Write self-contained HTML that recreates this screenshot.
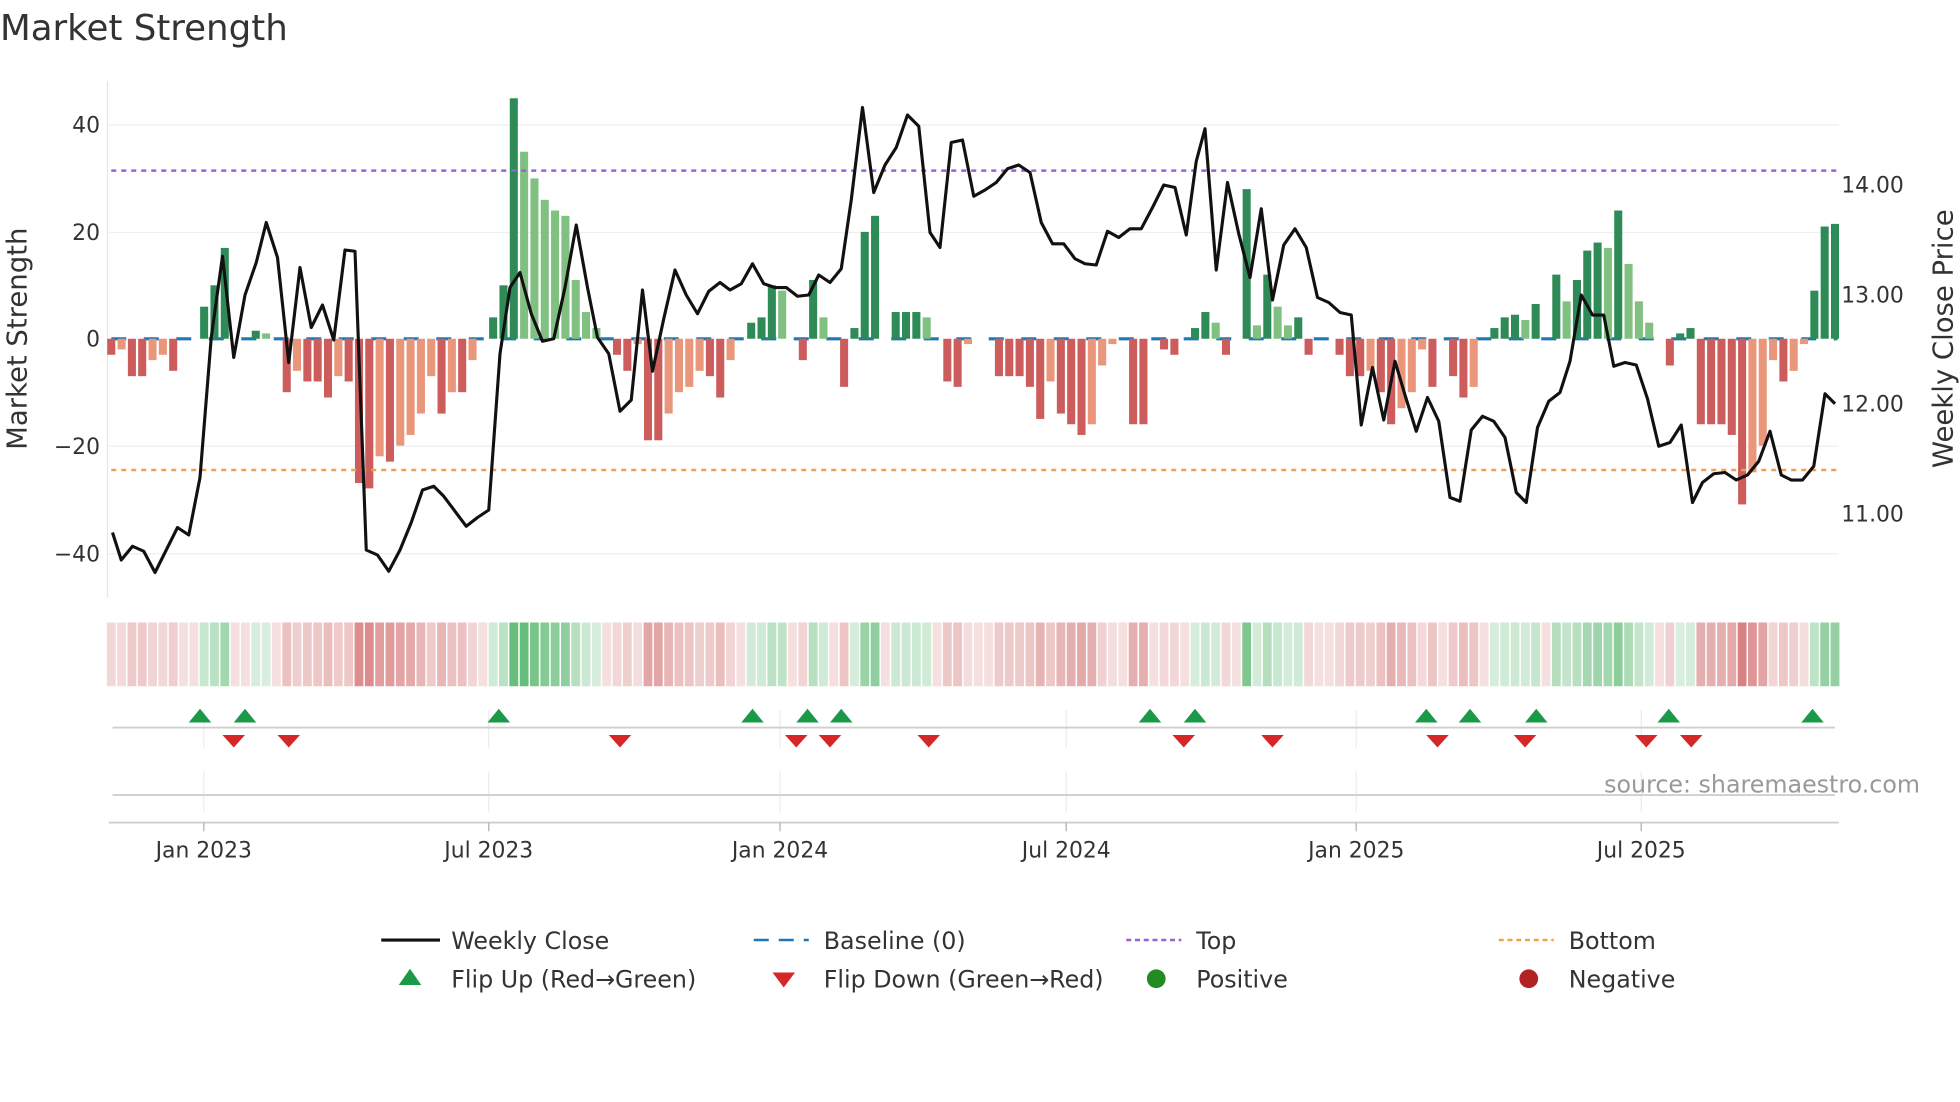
<!DOCTYPE html>
<html><head><meta charset="utf-8"><style>
html,body{margin:0;padding:0;background:#fff;}
svg{display:block;font-family:"DejaVu Sans","Liberation Sans",sans-serif;}
</style></head><body>
<svg id="s" width="1960" height="1102" viewBox="0 0 1568 881.6" xmlns="http://www.w3.org/2000/svg">
<rect width="1568" height="882" fill="#fff"/>
<text x="0" y="32" font-size="28.5" fill="#333">Market Strength</text>
<line x1="86" y1="65" x2="86" y2="478" stroke="#e6e6e6"/>
<g stroke="#eeeeee" stroke-width="1">
<line x1="87" y1="100" x2="1471" y2="100"/><line x1="87" y1="186" x2="1471" y2="186"/>
<line x1="87" y1="357" x2="1471" y2="357"/><line x1="87" y1="443" x2="1471" y2="443"/>
</g>
<g font-size="17.5" fill="#333" text-anchor="end">
<text x="80" y="106">40</text><text x="80" y="192">20</text><text x="80" y="277">0</text>
<text x="80" y="363">−20</text><text x="80" y="449">−40</text>
</g>
<g font-size="17.5" fill="#333">
<text x="1473" y="154">14.00</text><text x="1473" y="242">13.00</text>
<text x="1473" y="329">12.00</text><text x="1473" y="417">11.00</text>
</g>
<text transform="translate(21,271) rotate(-90)" font-size="22" fill="#333" text-anchor="middle">Market Strength</text>
<text transform="translate(1562,271) rotate(-90)" font-size="22" fill="#333" text-anchor="middle">Weekly Close Price</text>
<line x1="89" y1="271" x2="1470" y2="271" stroke="#1f77b4" stroke-width="2.5" stroke-dasharray="12,14"/>
<g id="bars"></g>
<line x1="89" y1="136.5" x2="1470" y2="136.5" stroke="#9b5fd6" stroke-width="2" stroke-dasharray="4,4"/>
<line x1="89" y1="376" x2="1470" y2="376" stroke="#f0a050" stroke-width="2" stroke-dasharray="4,4"/>
<polyline id="price" fill="none" stroke="#111" stroke-width="2.5" stroke-linejoin="round"/>
<g id="heat"></g>
<g stroke="#e8ecf2" stroke-width="1">
<line x1="163" y1="568" x2="163" y2="598"/><line x1="391" y1="568" x2="391" y2="598"/><line x1="624" y1="568" x2="624" y2="598"/><line x1="853" y1="568" x2="853" y2="598"/><line x1="1085" y1="568" x2="1085" y2="598"/><line x1="1313" y1="568" x2="1313" y2="598"/>
<line x1="163" y1="617" x2="163" y2="650"/><line x1="391" y1="617" x2="391" y2="650"/><line x1="624" y1="617" x2="624" y2="650"/><line x1="853" y1="617" x2="853" y2="650"/><line x1="1085" y1="617" x2="1085" y2="650"/><line x1="1313" y1="617" x2="1313" y2="650"/>
</g>
<line x1="90" y1="582" x2="1468" y2="582" stroke="#cfcfcf" stroke-width="1.5"/>
<line x1="90" y1="636" x2="1468" y2="636" stroke="#cfcfcf" stroke-width="1.5"/>
<line x1="87" y1="658" x2="1471" y2="658" stroke="#cfcfcf" stroke-width="1.5"/>
<g stroke="#bbb" stroke-width="1.2">
<line x1="163" y1="658" x2="163" y2="665"/><line x1="391" y1="658" x2="391" y2="665"/><line x1="624" y1="658" x2="624" y2="665"/><line x1="853" y1="658" x2="853" y2="665"/><line x1="1085" y1="658" x2="1085" y2="665"/><line x1="1313" y1="658" x2="1313" y2="665"/>
</g>
<g id="tri"></g>
<text x="1536" y="634" font-size="19" fill="#999" text-anchor="end">source: sharemaestro.com</text>
<g font-size="17.5" fill="#333" text-anchor="middle">
<text x="163" y="686">Jan 2023</text><text x="391" y="686">Jul 2023</text><text x="624" y="686">Jan 2024</text>
<text x="853" y="686">Jul 2024</text><text x="1085" y="686">Jan 2025</text><text x="1313" y="686">Jul 2025</text>
</g>
<g font-size="19" fill="#333">
<line x1="305" y1="752" x2="352" y2="752" stroke="#111" stroke-width="2.5"/>
<text x="361" y="759">Weekly Close</text>
<line x1="603" y1="752" x2="647" y2="752" stroke="#1f77b4" stroke-width="2" stroke-dasharray="12,8"/>
<text x="659" y="759">Baseline (0)</text>
<line x1="901" y1="752" x2="945" y2="752" stroke="#9b5fd6" stroke-width="2" stroke-dasharray="4,3"/>
<text x="957" y="759">Top</text>
<line x1="1199" y1="752" x2="1243" y2="752" stroke="#f0a050" stroke-width="2" stroke-dasharray="4,3"/>
<text x="1255" y="759">Bottom</text>
<polygon points="319,788 328,775 337,788" fill="#1a9a48"/>
<text x="361" y="790">Flip Up (Red→Green)</text>
<polygon points="618,778 636,778 627,790" fill="#d62728"/>
<text x="659" y="790">Flip Down (Green→Red)</text>
<circle cx="925" cy="783" r="7.5" fill="#228b22"/>
<text x="957" y="790">Positive</text>
<circle cx="1223" cy="783" r="7.5" fill="#b22222"/>
<text x="1255" y="790">Negative</text>
</g>
</svg>
<script>
var NS="http://www.w3.org/2000/svg";
function el(t,a,p){var e=document.createElementNS(NS,t);for(var k in a)e.setAttribute(k,a[k]);p.appendChild(e);return e;}
var v=[-3,-2,-7,-7,-4,-3,-6,0,0,6,10,17,0,0,1.5,1,0,-10,-6,-8,-8,-11,-7,-8,-27,-28,-22,-23,-20,-18,-14,-7,-14,-10,-10,-4,0,4,10,45,35,30,26,24,23,11,5,2,0,-3,-6,-1,-19,-19,-14,-10,-9,-6,-7,-11,-4,0,3,4,10,9,0,-4,11,4,0,-9,2,20,23,0,5,5,5,4,0,-8,-9,-1,0,0,-7,-7,-7,-9,-15,-8,-14,-16,-18,-16,-5,-1,0,-16,-16,0,-2,-3,0,2,5,3,-3,0,28,2.5,12,6,2.5,4,-3,0,0,-3,-7,-7,-6,-10,-16,-13,-10,-2,-9,0,-7,-11,-9,0,2,4,4.5,3.5,6.5,0,12,7,11,16.5,18,17,24,14,7,3,0,-5,1,2,-16,-16,-16,-18,-31,-25,-20,-4,-8,-6,-1,9,21,21.5];
var n=v.length,x0=89,x1=1468,sp=(x1-x0)/(n-1),bw=sp*0.78;
var bars=document.getElementById('bars'),heat=document.getElementById('heat');
for(var i=0;i<n;i++){var x=x0+i*sp,val=v[i],prev=i?v[i-1]:0,h=Math.abs(val)*4.275,c;
 if(val>0)c=(val>=prev)?'#2e8b57':'#80c080';else c=(val<=prev)?'#cd5c5c':'#e9967a';
 if(val!=0)el('rect',{x:x-bw/2,y:val>0?271-h:271,width:bw,height:h,fill:c},bars);
 var a=0.18+Math.min(Math.abs(val),35)/35*0.6;
 el('rect',{x:x-sp/2+0.6,y:498,width:sp-1.2,height:51,fill:val>0?'rgb(60,170,85)':'rgb(200,80,80)','fill-opacity':a},heat);}
var p=[[90,426],[97,448],[106,437],[115,441],[124,458],[133,440],[142,422],[151,428],[160,382],[169,270],[178,205],[187,286],[196,236],[205,210],[213,178],[222,206],[231,290],[240,214],[249,262],[258,244],[267,272],[276,200],[284,201],[293,440],[302,444],[311,457],[320,440],[329,418],[338,392],[347,389],[355,397],[364,409],[373,421],[382,414],[391,408],[400,283],[408,230],[416,218],[425,251],[434,273],[443,271],[452,230],[461,180],[470,230],[478,270],[487,283],[496,329],[505,320],[514,232],[522,297],[531,255],[540,216],[549,236],[558,251],[567,233],[576,226],[584,232],[593,227],[602,211],[611,227],[620,230],[629,230],[638,237],[647,236],[655,220],[664,226],[673,215],[681,160],[690,86],[699,154],[708,132],[717,118],[726,92],[735,101],[744,186],[752,198],[761,114],[770,112],[779,157],[788,152],[797,146],[806,135],[815,132],[824,138],[833,178],[842,195],[851,195],[860,207],[868,211],[877,212],[886,185],[895,190],[904,183],[913,183],[922,166],[931,148],[940,150],[949,188],[957,129],[964,103],[973,216],[982,146],[991,187],[1000,222],[1009,167],[1018,240],[1027,196],[1036,183],[1045,198],[1054,238],[1063,242],[1072,250],[1081,252],[1089,340],[1098,294],[1107,336],[1116,289],[1124,316],[1133,345],[1142,318],[1151,337],[1160,398],[1168,401],[1177,344],[1186,333],[1195,337],[1204,350],[1213,394],[1221,402],[1230,342],[1239,321],[1248,314],[1256,289],[1265,236],[1274,252],[1283,252],[1291,293],[1300,290],[1309,292],[1318,319],[1327,357],[1336,354],[1345,340],[1354,402],[1362,386],[1371,379],[1380,378],[1389,384],[1398,380],[1407,369],[1416,345],[1425,380],[1433,384],[1442,384],[1451,373],[1460,315],[1468,323]];
document.getElementById('price').setAttribute('points',p.map(function(q){return q.join(',')}).join(' '));
var tri=document.getElementById('tri');
[160,196,399,602,646,673,920,956,1141,1176,1229,1335,1450].forEach(function(x){el('polygon',{points:(x-9)+',578 '+x+',567 '+(x+9)+',578',fill:'#1a9a48'},tri);});
[187,231,496,637,664,743,947,1018,1150,1220,1317,1353].forEach(function(x){el('polygon',{points:(x-9)+',588 '+(x+9)+',588 '+x+',598',fill:'#d62728'},tri);});
</script>
</body></html>
